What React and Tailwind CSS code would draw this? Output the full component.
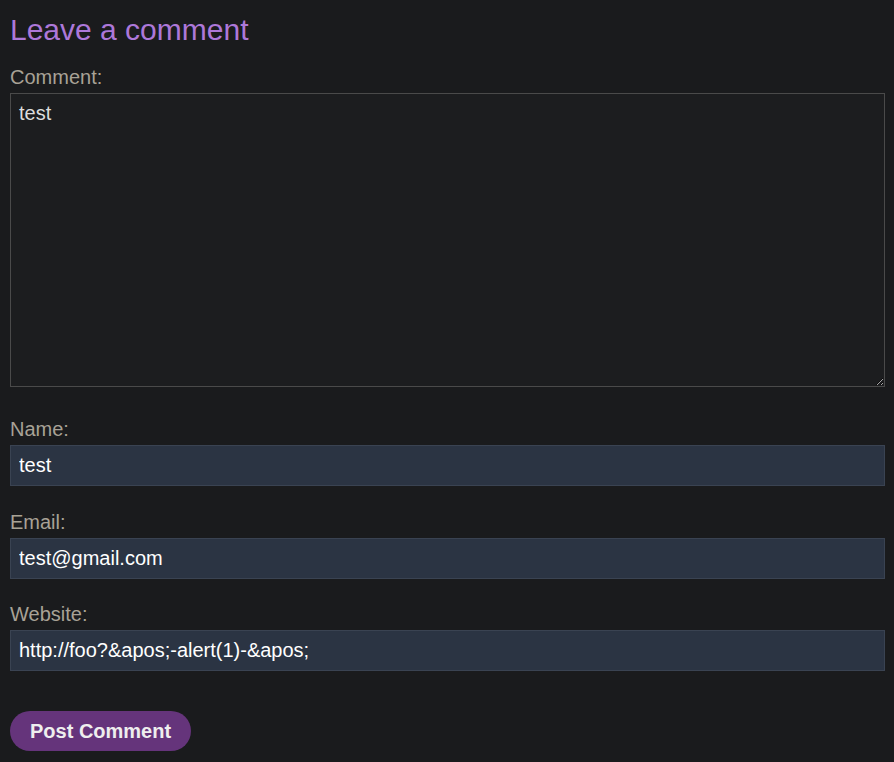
import React from 'react';

const fields = [
    { label: 'Name:', value: 'test', mt: 'mt-[31px]' },
    { label: 'Email:', value: 'test@gmail.com', mt: 'mt-[25px]' },
    { label: 'Website:', value: 'http://foo?&apos;-alert(1)-&apos;', mt: 'mt-[24px]' },
];

const App = () => {
    return (
        <div className="min-h-[762px] bg-[#1a1b1d] pl-[10px] pr-[9px] pt-[10px] font-['Liberation_Sans',Arial,sans-serif] [color-scheme:dark]">
            <h1 className="text-[30px] leading-[40px] text-[#ad78d9]">Leave a comment</h1>
            <form className="mt-[16px]" onSubmit={(e) => e.preventDefault()}>
                <label className="block text-[20px] leading-[23px] text-[#a8a296]">Comment:</label>
                <textarea
                    defaultValue="test"
                    className="mt-[4px] block h-[294px] w-full border border-[#4a4a4a] bg-[#1c1d1f] px-[8px] py-[8px] text-[20px] leading-[23px] text-[#ddd] outline-none"
                />
                {fields.map((f) => (
                    <div key={f.label} className={f.mt}>
                        <label className="block text-[20px] leading-[23px] text-[#a8a296]">{f.label}</label>
                        <input
                            type="text"
                            defaultValue={f.value}
                            className="mt-[4px] block h-[41px] w-full border border-[#3a4352] bg-[#2b3443] px-[8px] text-[20px] text-white outline-none"
                        />
                    </div>
                ))}
                <button
                    type="submit"
                    className="mt-[40px] h-[40px] rounded-full bg-[#65347b] px-[20px] text-[20px] font-bold text-[#eee]"
                >
                    Post Comment
                </button>
            </form>
        </div>
    );
};

export default App;
